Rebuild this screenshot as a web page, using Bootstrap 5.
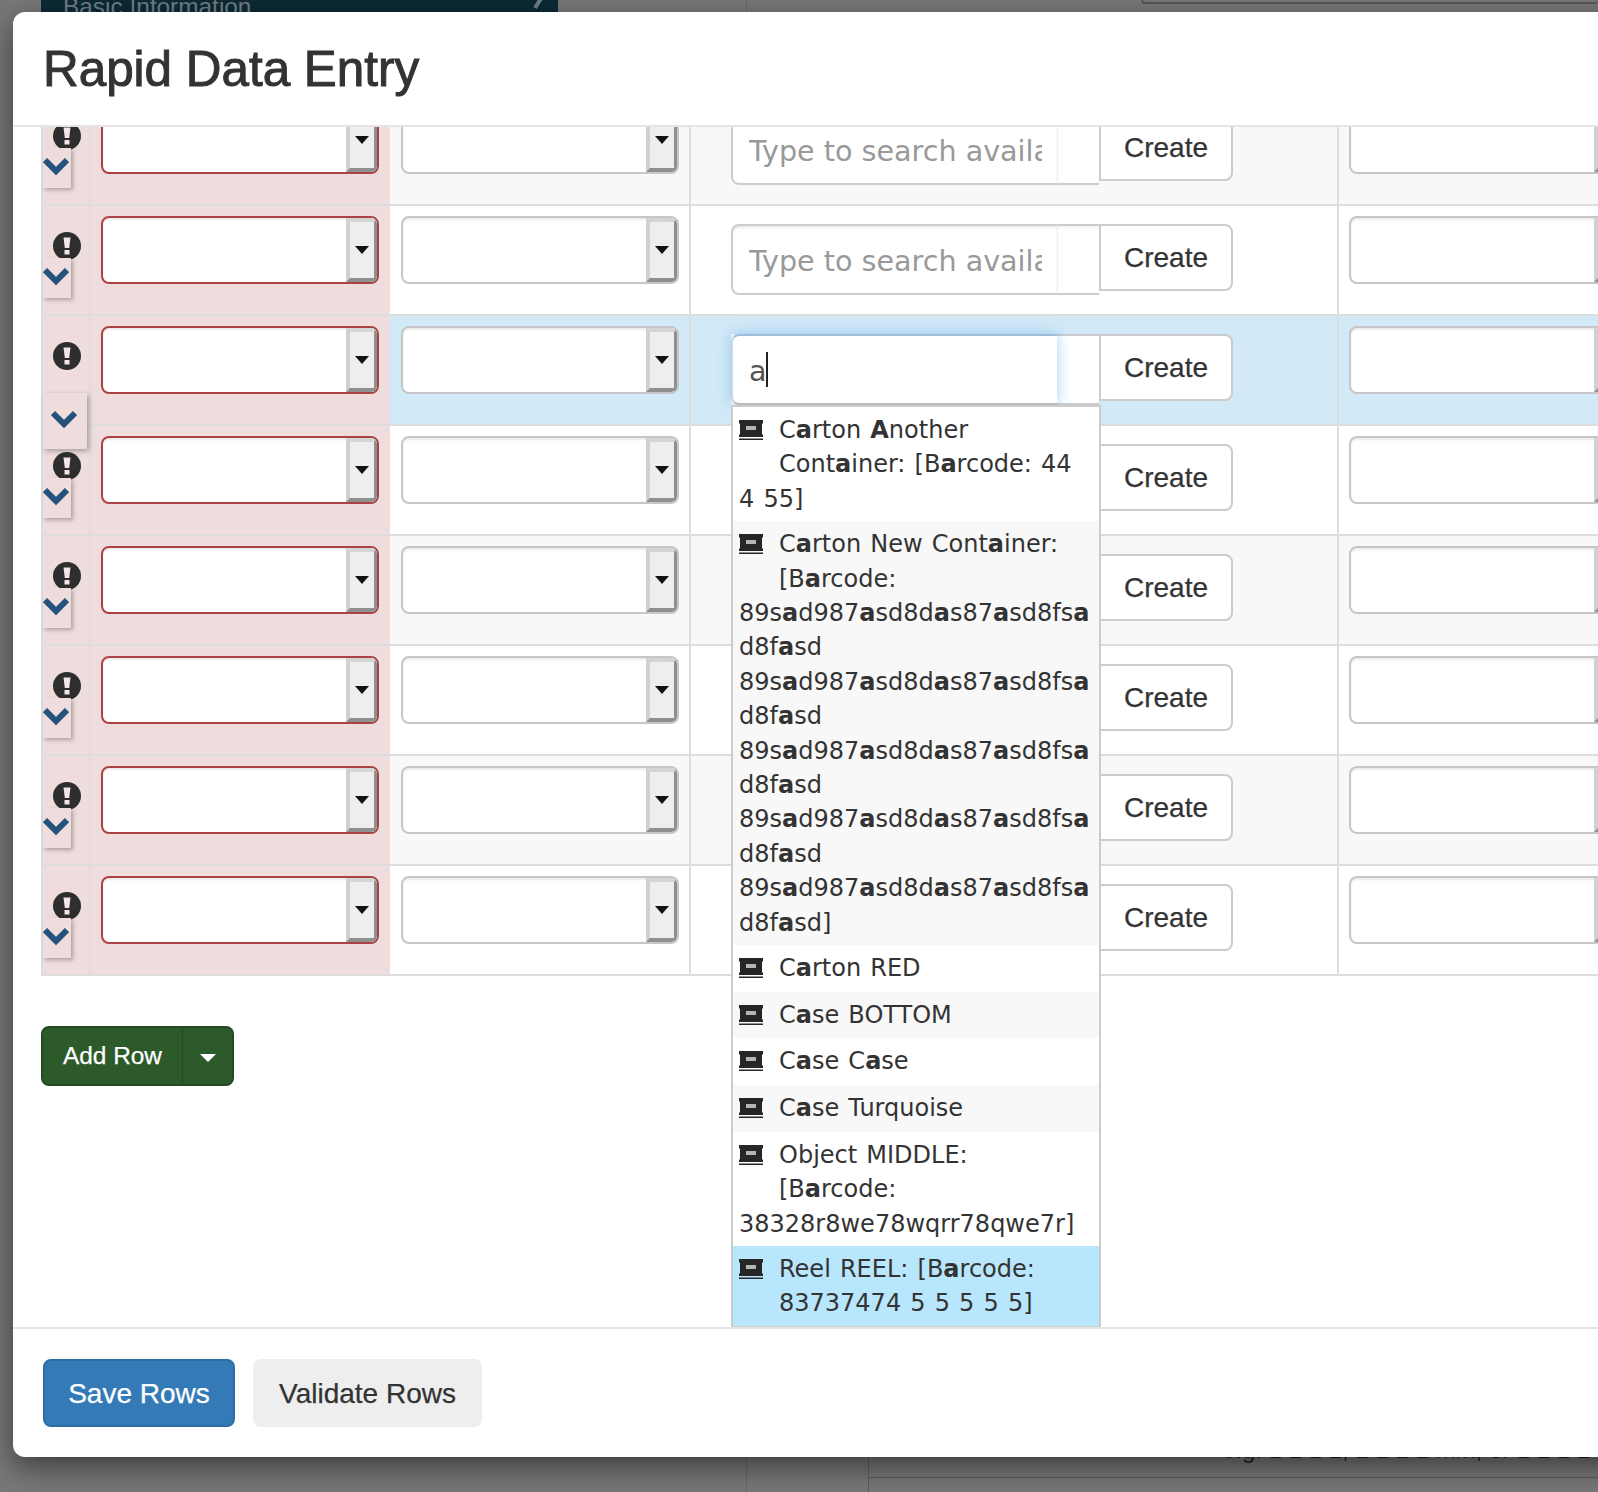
<!DOCTYPE html>
<html lang="en">
<head>
<meta charset="utf-8">
<title>Rapid Data Entry</title>
<link href="https://cdn.jsdelivr.net/npm/bootstrap@5.3.0/dist/css/bootstrap.min.css" rel="stylesheet">
<style>
html,body{height:1492px;overflow:hidden}
body{background:#787878;font-family:"Liberation Sans",Arial,sans-serif;color:#333;position:relative;width:1598px}
.under-bar{position:absolute;left:41px;top:-20px;width:517px;height:60px;background:#0c2a35;color:#6f7f85;font-size:24.4px;padding:0 22px;line-height:54px}
.under-bar svg{position:absolute;left:489px;top:14px}
.under-col{position:absolute;left:746px;top:0;width:1px;height:1492px;background:#686868}
.under-col2{position:absolute;left:868px;top:1400px;width:1px;height:92px;background:#5e5e5e}
.under-line{position:absolute;left:868px;right:0;top:1477px;height:1px;background:#5a5a5a}
.under-top{position:absolute;left:1141px;right:0;top:-10px;height:14px;border:2px solid #585858;border-radius:4px;border-right:0}
.under-text{position:absolute;left:1222px;top:1435px;font-size:24px;line-height:30px;color:#222;white-space:nowrap}
.rde-modal.modal-content{position:absolute;left:13px;top:12px;width:1700px;height:1445px;border:0;border-radius:12px;background:#fff;box-shadow:0 10px 30px rgba(0,0,0,.5);z-index:5;color:#333}
.rde-head.modal-header{height:115px;padding:0 30px;border-bottom:2px solid #e5e5e5;border-radius:12px 12px 0 0;flex:none}
.rde-head .modal-title{font-size:49.4px;line-height:1;font-weight:400;color:#333;-webkit-text-stroke:1px #333}
.rde-body.modal-body{height:1200px;flex:none;padding:0 0 0 28px;overflow:hidden}
.rde-table.table{table-layout:fixed;width:1598px;margin:-31px 0 0;border-collapse:separate;border-spacing:0;--bs-table-bg:transparent}
.rde-table td{padding:0;height:110px;vertical-align:top;border:0;border-bottom:2px solid #ddd;box-shadow:none;background:#fff;position:relative}
.rde-table tr.str td{background:#f8f8f8}
.rde-table tr.act td{background:#d2e9f7}
.rde-table td.c1,.rde-table tr td.c1,.rde-table td.c2,.rde-table tr td.c2{background:#efdcdc}
.rde-table td.c1{border-left:2px solid #ddd;border-right:2px solid #ddd;padding:26px 0 0 10px}
.rde-table td.c2{padding:10px 0 0 10px}
.rde-table td.c3{padding:10px 0 0 11px;border-right:2px solid #ddd}
.rde-table td.c4{padding:18px 0 0 40px;border-right:2px solid #ddd}
.rde-table td.c5{padding:10px 0 0 10px}
.rde-table tr.act td.c1{z-index:2}
.warn{display:block}
.chev-box{position:absolute;left:0;top:52px;width:28px;height:40px;background:#efdcdc;box-shadow:2px 2px 4px rgba(0,0,0,.28);display:flex;justify-content:flex-start;padding-top:9px}
.chev-box svg{flex:none}
.chev-box.open{top:77px;width:44px;height:56px;padding:17px 0 0 8px;box-shadow:2px 2px 5px rgba(0,0,0,.3)}
.fake-sel{width:278px;height:68px;border:2px solid #c6c6c6;border-radius:8px;background:#fff;box-shadow:inset 0 2px 2px rgba(0,0,0,.075);overflow:hidden;display:flex;justify-content:flex-end}
.fake-sel.bad{border-color:#a94442}
.sel-btn{width:31px;height:100%;padding-right:1px;background:#eee;border-style:solid;border-width:4px 3px 4px 4px;border-color:#d4d4d4 #8f8f8f #8f8f8f #d0d0d0;display:flex;align-items:center;justify-content:center}
.sel-btn i{display:block;border-style:solid;border-width:8px 7px 0;border-color:#111 transparent transparent}
.typeahead-row{width:502px}
.ta-wrap{width:368px;height:71px;position:relative;display:flex;background:#fff;flex:none}
.ta-wrap .form-control{width:326px;height:71px;flex:none;font-family:"DejaVu Sans",sans-serif;font-size:28.6px;color:#555;padding:3px 15px 0 16px;border:2px solid #ccc;border-right:0;border-radius:8px 0 0 8px;box-shadow:inset 0 2px 2px rgba(0,0,0,.075);background:#fff}
.ta-wrap .form-control::placeholder{color:#999;opacity:1}
.ta-fill{flex:1;border:2px solid #ccc;border-width:2px 0;border-left:1px solid #eee;box-shadow:inset 0 2px 2px rgba(0,0,0,.05)}
.ta-wrap.focused .form-control{border-color:#9dbcd6 #c8d7e2 #bbb;box-shadow:0 0 14px rgba(102,175,233,.6);position:relative;z-index:1}
.ta-wrap.focused .ta-fill{border-left:0;box-shadow:none}
.ta-caret{position:absolute;left:35px;top:18px;width:2px;height:35px;background:#222;z-index:2}
.create-btn.btn{width:134px;height:67px;flex:none;font-size:28px;line-height:1;color:#333;background:#fff;border:2px solid #ccc;border-radius:0 8px 8px 0;padding:1px 0 0;-webkit-text-stroke:.25px #333}
.ta-menu{position:absolute;left:0;top:71px;width:370px;background:#fff;border:2px solid #ccc;z-index:6;font-family:"DejaVu Sans",sans-serif;font-size:24px;line-height:34.4px;color:#333;word-spacing:1.5px;overflow-wrap:anywhere}
.ta-item{padding:6px 2px 5px 6px;min-height:46.7px}
.ta-item.alt{background:#f8f8f8}
.ta-item.cur{background:#b8e6fc}
.ta-ico{float:left;width:40px;height:39.5px;padding-top:7px}
.ta-ico svg{display:block}
.ta-item b{font-weight:700}
.add-group{margin-top:50px;display:inline-flex}
.add-group .btn{height:60px;font-size:24.4px;color:#fff;background:#2c5a2a;border:2px solid #214a20;line-height:1;-webkit-text-stroke:.25px #fff}
.add-main.btn{width:143px;padding:0;border-radius:8px 0 0 8px}
.add-caret.btn{width:51px;margin-left:0;padding:0;border-left:0;border-radius:0 8px 8px 0;display:flex;align-items:center;justify-content:center}
.add-caret.btn::after{margin:4px 0 0;border-top:8px solid #fff;border-left:8px solid transparent;border-right:8px solid transparent;border-bottom:0}
.rde-foot.modal-footer{height:130px;flex:none;padding:30px;border-top:2px solid #e5e5e5;justify-content:flex-start;align-items:flex-start;gap:18px}
.rde-foot .btn{height:68px;margin:0;font-size:28px;line-height:1;border-radius:8px;padding:2px 0 0;-webkit-text-stroke:.25px currentColor}
.save-btn.btn{width:192px;background:#337ab7;border:2px solid #2e6da4;color:#fff}
.valid-btn.btn{width:229px;background:#eee;border:0;color:#333}
</style>
</head>
<body>
<div class="under-bar">Basic Information<svg width="18" height="16" viewBox="0 0 18 16"><path d="M15 -2 5 14" stroke="#6f7f85" stroke-width="4" fill="none"/></svg></div>
<div class="under-col"></div>
<div class="under-col2"></div>
<div class="under-line"></div>
<div class="under-top"></div>
<div class="under-text">e.g. 1 1 1 1, 1 1 1 1 mm, or 1 1 1 1</div>

<div class="modal-content rde-modal">
  <div class="modal-header rde-head"><h4 class="modal-title">Rapid Data Entry</h4></div>
  <div class="modal-body rde-body">
    <table class="table rde-table">
      <colgroup><col style="width:50px"><col style="width:299px"><col style="width:301px"><col style="width:648px"><col style="width:300px"></colgroup>
      <tbody>
      <tr class="str">
        <td class="c1"><svg class="warn" width="28" height="28" viewBox="0 0 28 28"><circle cx="14" cy="14" r="14" fill="#2e2e2e"/><path d="M10.5 5.5h7L16.2 16h-4.4z" fill="#f3e6e6"/><rect x="11.5" y="18" width="5" height="4.5" fill="#f3e6e6"/></svg><div class="chev-box"><svg width="26" height="19" viewBox="0 0 26 19"><path d="M2 3l11 11L24 3" fill="none" stroke="#23527c" stroke-width="6"/></svg></div></td>
        <td class="c2"><div class="fake-sel bad"><div class="sel-btn"><i></i></div></div></td>
        <td class="c3"><div class="fake-sel"><div class="sel-btn"><i></i></div></div></td>
        <td class="c4"><div class="d-flex align-items-start typeahead-row"><div class="ta-wrap"><input class="form-control" type="text" placeholder="Type to search available containers"><div class="ta-fill"></div></div><button class="btn create-btn" type="button">Create</button></div></td>
        <td class="c5"><div class="fake-sel"><div class="sel-btn"><i></i></div></div></td>
      </tr>
      <tr>
        <td class="c1"><svg class="warn" width="28" height="28" viewBox="0 0 28 28"><circle cx="14" cy="14" r="14" fill="#2e2e2e"/><path d="M10.5 5.5h7L16.2 16h-4.4z" fill="#f3e6e6"/><rect x="11.5" y="18" width="5" height="4.5" fill="#f3e6e6"/></svg><div class="chev-box"><svg width="26" height="19" viewBox="0 0 26 19"><path d="M2 3l11 11L24 3" fill="none" stroke="#23527c" stroke-width="6"/></svg></div></td>
        <td class="c2"><div class="fake-sel bad"><div class="sel-btn"><i></i></div></div></td>
        <td class="c3"><div class="fake-sel"><div class="sel-btn"><i></i></div></div></td>
        <td class="c4"><div class="d-flex align-items-start typeahead-row"><div class="ta-wrap"><input class="form-control" type="text" placeholder="Type to search available containers"><div class="ta-fill"></div></div><button class="btn create-btn" type="button">Create</button></div></td>
        <td class="c5"><div class="fake-sel"><div class="sel-btn"><i></i></div></div></td>
      </tr>
      <tr class="act">
        <td class="c1"><svg class="warn" width="28" height="28" viewBox="0 0 28 28"><circle cx="14" cy="14" r="14" fill="#2e2e2e"/><path d="M10.5 5.5h7L16.2 16h-4.4z" fill="#f3e6e6"/><rect x="11.5" y="18" width="5" height="4.5" fill="#f3e6e6"/></svg><div class="chev-box open"><svg width="26" height="19" viewBox="0 0 26 19"><path d="M2 3l11 11L24 3" fill="none" stroke="#23527c" stroke-width="6"/></svg></div></td>
        <td class="c2"><div class="fake-sel bad"><div class="sel-btn"><i></i></div></div></td>
        <td class="c3"><div class="fake-sel"><div class="sel-btn"><i></i></div></div></td>
        <td class="c4" style="z-index:3"><div class="d-flex align-items-start typeahead-row"><div class="ta-wrap focused"><input class="form-control" type="text" value="a"><span class="ta-caret"></span><div class="ta-fill"></div>
          <div class="ta-menu">
            <div class="ta-item"><span class="ta-ico"><svg width="24" height="20" viewBox="0 0 24 20"><path d="M0 0h24v3l-1 1v10l1 1v2H0v-2l1-1V4L0 3z" fill="#262626"/><rect x="7" y="6" width="10" height="4" fill="#b5b5b5"/><rect y="18.5" width="24" height="1.5" fill="#262626"/></svg></span>C<b>a</b>rton <b>A</b>nother Cont<b>a</b>iner: [B<b>a</b>rcode: 44<br>4 55]</div>
            <div class="ta-item alt"><span class="ta-ico"><svg width="24" height="20" viewBox="0 0 24 20"><path d="M0 0h24v3l-1 1v10l1 1v2H0v-2l1-1V4L0 3z" fill="#262626"/><rect x="7" y="6" width="10" height="4" fill="#b5b5b5"/><rect y="18.5" width="24" height="1.5" fill="#262626"/></svg></span>C<b>a</b>rton New Cont<b>a</b>iner: [B<b>a</b>rcode: 89s<b>a</b>d987<b>a</b>sd8d<b>a</b>s87<b>a</b>sd8fs<b>a</b>d8f<b>a</b>sd 89s<b>a</b>d987<b>a</b>sd8d<b>a</b>s87<b>a</b>sd8fs<b>a</b>d8f<b>a</b>sd 89s<b>a</b>d987<b>a</b>sd8d<b>a</b>s87<b>a</b>sd8fs<b>a</b>d8f<b>a</b>sd 89s<b>a</b>d987<b>a</b>sd8d<b>a</b>s87<b>a</b>sd8fs<b>a</b>d8f<b>a</b>sd 89s<b>a</b>d987<b>a</b>sd8d<b>a</b>s87<b>a</b>sd8fs<b>a</b>d8f<b>a</b>sd]</div>
            <div class="ta-item"><span class="ta-ico"><svg width="24" height="20" viewBox="0 0 24 20"><path d="M0 0h24v3l-1 1v10l1 1v2H0v-2l1-1V4L0 3z" fill="#262626"/><rect x="7" y="6" width="10" height="4" fill="#b5b5b5"/><rect y="18.5" width="24" height="1.5" fill="#262626"/></svg></span>C<b>a</b>rton RED</div>
            <div class="ta-item alt"><span class="ta-ico"><svg width="24" height="20" viewBox="0 0 24 20"><path d="M0 0h24v3l-1 1v10l1 1v2H0v-2l1-1V4L0 3z" fill="#262626"/><rect x="7" y="6" width="10" height="4" fill="#b5b5b5"/><rect y="18.5" width="24" height="1.5" fill="#262626"/></svg></span>C<b>a</b>se BOTTOM</div>
            <div class="ta-item"><span class="ta-ico"><svg width="24" height="20" viewBox="0 0 24 20"><path d="M0 0h24v3l-1 1v10l1 1v2H0v-2l1-1V4L0 3z" fill="#262626"/><rect x="7" y="6" width="10" height="4" fill="#b5b5b5"/><rect y="18.5" width="24" height="1.5" fill="#262626"/></svg></span>C<b>a</b>se C<b>a</b>se</div>
            <div class="ta-item alt"><span class="ta-ico"><svg width="24" height="20" viewBox="0 0 24 20"><path d="M0 0h24v3l-1 1v10l1 1v2H0v-2l1-1V4L0 3z" fill="#262626"/><rect x="7" y="6" width="10" height="4" fill="#b5b5b5"/><rect y="18.5" width="24" height="1.5" fill="#262626"/></svg></span>C<b>a</b>se Turquoise</div>
            <div class="ta-item"><span class="ta-ico"><svg width="24" height="20" viewBox="0 0 24 20"><path d="M0 0h24v3l-1 1v10l1 1v2H0v-2l1-1V4L0 3z" fill="#262626"/><rect x="7" y="6" width="10" height="4" fill="#b5b5b5"/><rect y="18.5" width="24" height="1.5" fill="#262626"/></svg></span>Object MIDDLE:<br>[B<b>a</b>rcode:<br>38328r8we78wqrr78qwe7r]</div>
            <div class="ta-item cur"><span class="ta-ico"><svg width="24" height="20" viewBox="0 0 24 20"><path d="M0 0h24v3l-1 1v10l1 1v2H0v-2l1-1V4L0 3z" fill="#262626"/><rect x="7" y="6" width="10" height="4" fill="#b5b5b5"/><rect y="18.5" width="24" height="1.5" fill="#262626"/></svg></span>Reel REEL: [B<b>a</b>rcode: 83737474 5 5 5 5 5]</div>
          </div></div><button class="btn create-btn" type="button">Create</button></div></td>
        <td class="c5"><div class="fake-sel"><div class="sel-btn"><i></i></div></div></td>
      </tr>
      <tr>
        <td class="c1"><svg class="warn" width="28" height="28" viewBox="0 0 28 28"><circle cx="14" cy="14" r="14" fill="#2e2e2e"/><path d="M10.5 5.5h7L16.2 16h-4.4z" fill="#f3e6e6"/><rect x="11.5" y="18" width="5" height="4.5" fill="#f3e6e6"/></svg><div class="chev-box"><svg width="26" height="19" viewBox="0 0 26 19"><path d="M2 3l11 11L24 3" fill="none" stroke="#23527c" stroke-width="6"/></svg></div></td>
        <td class="c2"><div class="fake-sel bad"><div class="sel-btn"><i></i></div></div></td>
        <td class="c3"><div class="fake-sel"><div class="sel-btn"><i></i></div></div></td>
        <td class="c4"><div class="d-flex align-items-start typeahead-row"><div class="ta-wrap"><input class="form-control" type="text" placeholder="Type to search available containers"><div class="ta-fill"></div></div><button class="btn create-btn" type="button">Create</button></div></td>
        <td class="c5"><div class="fake-sel"><div class="sel-btn"><i></i></div></div></td>
      </tr>
      <tr class="str">
        <td class="c1"><svg class="warn" width="28" height="28" viewBox="0 0 28 28"><circle cx="14" cy="14" r="14" fill="#2e2e2e"/><path d="M10.5 5.5h7L16.2 16h-4.4z" fill="#f3e6e6"/><rect x="11.5" y="18" width="5" height="4.5" fill="#f3e6e6"/></svg><div class="chev-box"><svg width="26" height="19" viewBox="0 0 26 19"><path d="M2 3l11 11L24 3" fill="none" stroke="#23527c" stroke-width="6"/></svg></div></td>
        <td class="c2"><div class="fake-sel bad"><div class="sel-btn"><i></i></div></div></td>
        <td class="c3"><div class="fake-sel"><div class="sel-btn"><i></i></div></div></td>
        <td class="c4"><div class="d-flex align-items-start typeahead-row"><div class="ta-wrap"><input class="form-control" type="text" placeholder="Type to search available containers"><div class="ta-fill"></div></div><button class="btn create-btn" type="button">Create</button></div></td>
        <td class="c5"><div class="fake-sel"><div class="sel-btn"><i></i></div></div></td>
      </tr>
      <tr>
        <td class="c1"><svg class="warn" width="28" height="28" viewBox="0 0 28 28"><circle cx="14" cy="14" r="14" fill="#2e2e2e"/><path d="M10.5 5.5h7L16.2 16h-4.4z" fill="#f3e6e6"/><rect x="11.5" y="18" width="5" height="4.5" fill="#f3e6e6"/></svg><div class="chev-box"><svg width="26" height="19" viewBox="0 0 26 19"><path d="M2 3l11 11L24 3" fill="none" stroke="#23527c" stroke-width="6"/></svg></div></td>
        <td class="c2"><div class="fake-sel bad"><div class="sel-btn"><i></i></div></div></td>
        <td class="c3"><div class="fake-sel"><div class="sel-btn"><i></i></div></div></td>
        <td class="c4"><div class="d-flex align-items-start typeahead-row"><div class="ta-wrap"><input class="form-control" type="text" placeholder="Type to search available containers"><div class="ta-fill"></div></div><button class="btn create-btn" type="button">Create</button></div></td>
        <td class="c5"><div class="fake-sel"><div class="sel-btn"><i></i></div></div></td>
      </tr>
      <tr class="str">
        <td class="c1"><svg class="warn" width="28" height="28" viewBox="0 0 28 28"><circle cx="14" cy="14" r="14" fill="#2e2e2e"/><path d="M10.5 5.5h7L16.2 16h-4.4z" fill="#f3e6e6"/><rect x="11.5" y="18" width="5" height="4.5" fill="#f3e6e6"/></svg><div class="chev-box"><svg width="26" height="19" viewBox="0 0 26 19"><path d="M2 3l11 11L24 3" fill="none" stroke="#23527c" stroke-width="6"/></svg></div></td>
        <td class="c2"><div class="fake-sel bad"><div class="sel-btn"><i></i></div></div></td>
        <td class="c3"><div class="fake-sel"><div class="sel-btn"><i></i></div></div></td>
        <td class="c4"><div class="d-flex align-items-start typeahead-row"><div class="ta-wrap"><input class="form-control" type="text" placeholder="Type to search available containers"><div class="ta-fill"></div></div><button class="btn create-btn" type="button">Create</button></div></td>
        <td class="c5"><div class="fake-sel"><div class="sel-btn"><i></i></div></div></td>
      </tr>
      <tr>
        <td class="c1"><svg class="warn" width="28" height="28" viewBox="0 0 28 28"><circle cx="14" cy="14" r="14" fill="#2e2e2e"/><path d="M10.5 5.5h7L16.2 16h-4.4z" fill="#f3e6e6"/><rect x="11.5" y="18" width="5" height="4.5" fill="#f3e6e6"/></svg><div class="chev-box"><svg width="26" height="19" viewBox="0 0 26 19"><path d="M2 3l11 11L24 3" fill="none" stroke="#23527c" stroke-width="6"/></svg></div></td>
        <td class="c2"><div class="fake-sel bad"><div class="sel-btn"><i></i></div></div></td>
        <td class="c3"><div class="fake-sel"><div class="sel-btn"><i></i></div></div></td>
        <td class="c4"><div class="d-flex align-items-start typeahead-row"><div class="ta-wrap"><input class="form-control" type="text" placeholder="Type to search available containers"><div class="ta-fill"></div></div><button class="btn create-btn" type="button">Create</button></div></td>
        <td class="c5"><div class="fake-sel"><div class="sel-btn"><i></i></div></div></td>
      </tr>
      </tbody>
    </table>
    <div class="btn-group add-group" role="group"><button class="btn add-main" type="button">Add Row</button><button class="btn add-caret dropdown-toggle" type="button" aria-label="More"></button></div>
  </div>
  <div class="modal-footer rde-foot"><button class="btn save-btn" type="button">Save Rows</button><button class="btn valid-btn" type="button">Validate Rows</button></div>
</div>
<script src="https://cdn.jsdelivr.net/npm/bootstrap@5.3.0/dist/js/bootstrap.bundle.min.js"></script>
</body>
</html>
